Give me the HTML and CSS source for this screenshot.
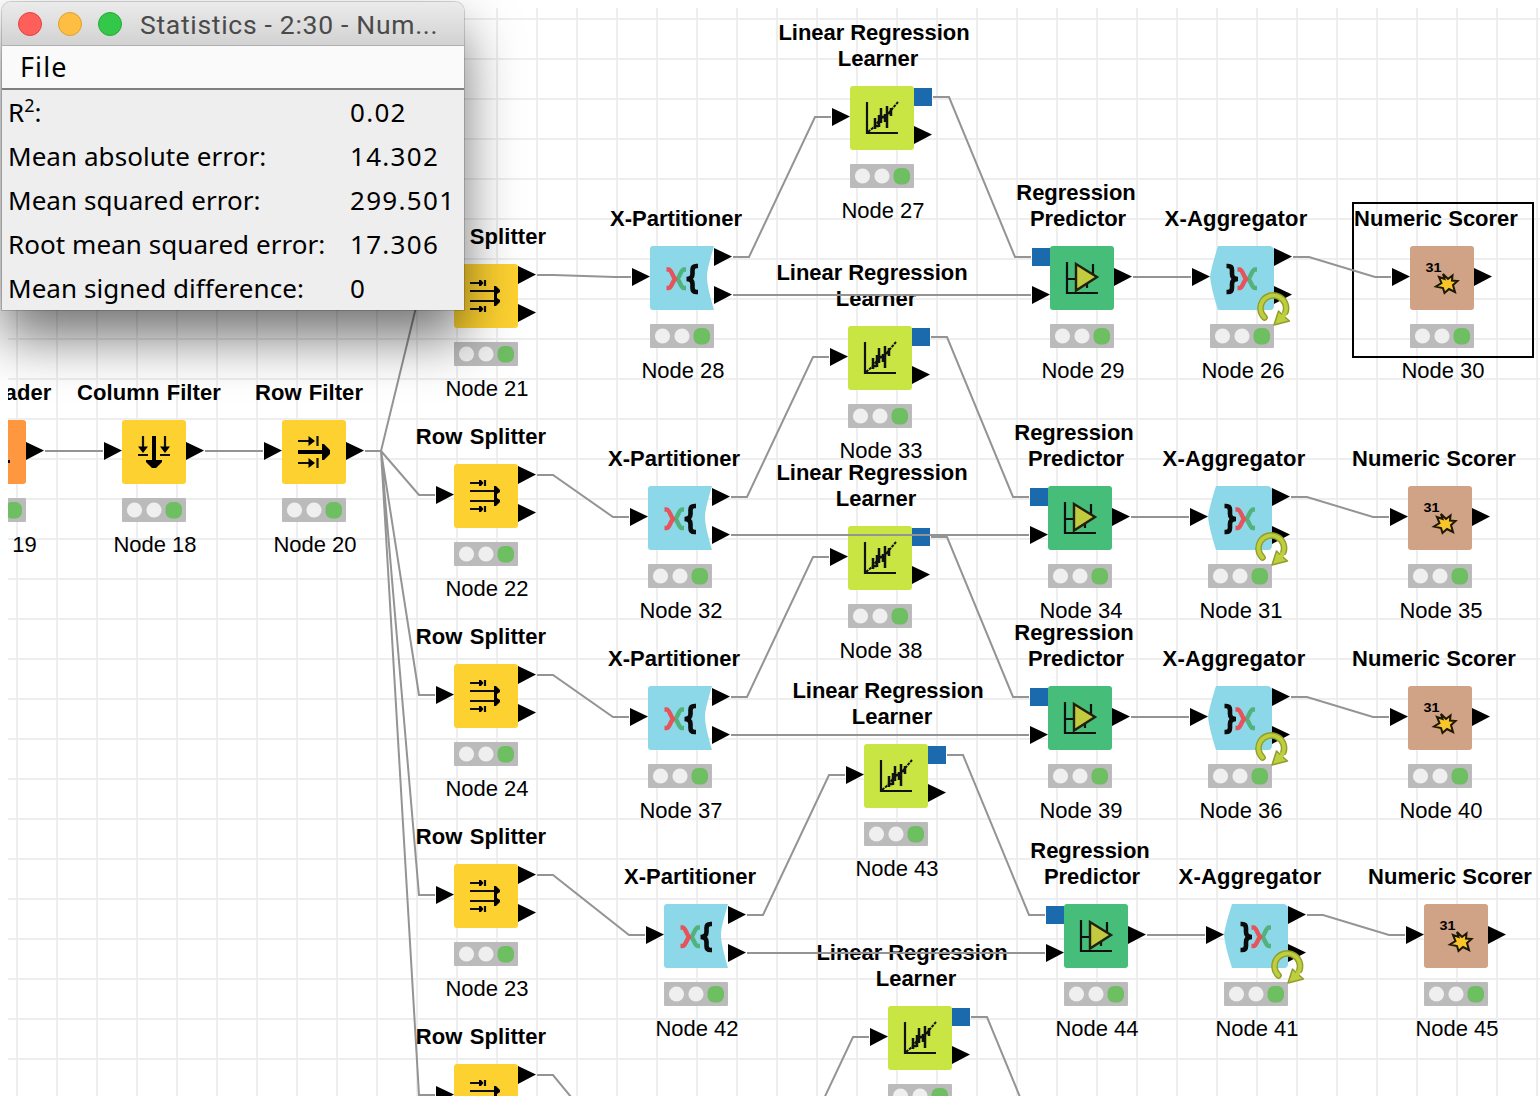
FILE: index.html
```html
<!DOCTYPE html>
<html lang="en">
<head>
<meta charset="utf-8">
<title>Workflow</title>
<link rel="stylesheet" href="styles.css">
</head>
<body>
<svg class="defs" aria-hidden="true">
  <defs>
    <path id="in" d="M-18 22L0 30.500L-18 40Z"/>
    <path id="out" d="M64 22L82 30.500L64 40Z"/>
    <path id="out-top" d="M64 2L82 10.500L64 20Z"/>
    <path id="out-low" d="M64 40L82 48.500L64 58Z"/>
    <g id="lights">
      <rect y="78" width="64" height="24" rx="1" fill="#bbb"/>
      <circle cx="12.500" cy="90" r="7.600" fill="#efefef"/>
      <circle cx="32" cy="90" r="7.600" fill="#efefef"/>
      <rect x="43.500" y="82" width="16.500" height="16.500" rx="6.500" fill="#6ebe62"/>
    </g>
    <g id="cross" fill="none" stroke-width="4.400">
      <path stroke="#52b27c" d="M19.500 2H17.500C14.500 2 14 8 11 11.500C14 15 14.500 20.500 17.500 20.500H19.500"/>
      <path stroke="#e5535b" d="M0 2H2C5 2 5.500 8 8.500 11.500C5.500 15 5 20.500 2 20.500H0"/>
    </g>
    <symbol id="reader" overflow="visible">
      <rect width="64" height="64" rx="3" fill="#fe973f"/>
      <rect x="45" y="40" width="3" height="3"/>
      <use href="#out"/><use href="#lights"/>
    </symbol>
    <symbol id="column-filter" overflow="visible">
      <rect width="64" height="64" rx="3" fill="#fdd130"/>
      <path d="M21 16V28M43 16V28M16 35H26M38 35H48" stroke="#111" stroke-width="2.200"/>
      <path d="M16 26.500H26L21 33ZM38 26.500H48L43 33ZM30 16h4v24h6v2l-6 6h-4l-6-6v-2h6Z"/>
      <use href="#in"/><use href="#out"/><use href="#lights"/>
    </symbol>
    <symbol id="row-filter" overflow="visible">
      <rect width="64" height="64" rx="3" fill="#fdd130"/>
      <path d="M16 21H28M16 43H28M35.500 16V26M35.500 38V48" stroke="#111" stroke-width="2.200"/>
      <path d="M26.500 16L33 21L26.500 26ZM26.500 38L33 43L26.500 48ZM16 30h24v-6h2l6 6v4l-6 6h-2v-6H16Z"/>
      <use href="#in"/><use href="#out"/><use href="#lights"/>
    </symbol>
    <symbol id="row-splitter" overflow="visible">
      <rect width="64" height="64" rx="3" fill="#fdd130"/>
      <path d="M16 19H27M16 45H27M31 16V22M31 42V48M16 27H44M16 37H44" stroke="#111" stroke-width="2.200"/>
      <path d="M25 16h2l2.500 3l-2.500 3h-2ZM25 42h2l2.500 3l-2.500 3h-2ZM40 22h2l4 4v2l-3 2v4l3 2v2l-4 4h-2Z"/>
      <use href="#in"/><use href="#out-top"/><use href="#out-low"/><use href="#lights"/>
    </symbol>
    <symbol id="partitioner" overflow="visible">
      <path d="M3 0H64C60 14 57 24 57 31S60 50 64 64H3Q0 64 0 61V3Q0 0 3 0Z" fill="#8dd8e8"/>
      <use href="#cross" x="16.500" y="21.500"/>
      <path d="M48 20H46.500Q42.500 20 42.500 24V28Q42.500 33 36.500 33Q42.500 33 42.500 38V42Q42.500 46 46.500 46H48" fill="none" stroke="#0b0b0b" stroke-width="4.600"/>
      <use href="#in"/><use href="#out-top"/><use href="#out-low"/><use href="#lights"/>
    </symbol>
    <symbol id="learner" overflow="visible">
      <rect width="64" height="64" rx="3" fill="#c8e544"/>
      <path d="M17 16V47H48" fill="none" stroke="#111" stroke-width="2.200"/>
      <path d="M18 46L24 41L28 36L32 32L38 28L42 23L48 16" fill="none" stroke="#111" stroke-width="2" stroke-dasharray="3 1"/>
      <path d="M25 32V43M29 29V41M31 22V37M35 28V36M37 20V42M41 22V30M25 40H29M29 34H31M31 31H37M37 27H41" fill="none" stroke="#111" stroke-width="2.500"/>
      <use href="#in"/><use href="#out-low"/><rect x="64" y="2" width="18" height="18" fill="#1c6aae"/>
      <use href="#lights"/>
    </symbol>
    <symbol id="predictor" overflow="visible">
      <rect width="64" height="64" rx="3" fill="#47bd7a"/>
      <path d="M17 16V47H48M17 33H25M43 18V30M37 35V42" fill="none" stroke="#111" stroke-width="2.200"/>
      <path d="M26 18L47 31L26 44.500Z" fill="#c2ca3f" stroke="#20210d" stroke-width="2.400"/>
      <rect x="-18" y="2" width="18" height="18" fill="#1c6aae"/>
      <path d="M-18 40L0 48.500L-18 58Z"/>
      <use href="#out"/><use href="#lights"/>
    </symbol>
    <symbol id="aggregator" overflow="visible">
      <path d="M8 0H60Q64 1 64 4V60Q64 63 61 64H8Q1 42 0 31Q1 22 8 0Z" fill="#8dd8e8"/>
      <path d="M16.500 20H18Q22 20 22 24V28Q22 33 28 33Q22 33 22 38V42Q22 46 18 46H16.500" fill="none" stroke="#0b0b0b" stroke-width="4.600"/>
      <use href="#cross" x="27.500" y="21.500"/>
      <use href="#in"/><use href="#out-top"/><use href="#out-low"/><use href="#lights"/>
      <path d="M54.500 71.500A12.800 12.800 0 1 1 75.500 66" fill="none" stroke="#929c2c" stroke-width="6.600" stroke-linecap="round"/>
      <path d="M68.500 65L64 79L79.500 75L76 72Z" fill="#becf3e" stroke="#929c2c" stroke-width="1.500" stroke-linejoin="round"/>
      <path d="M54.500 71.500A12.800 12.800 0 1 1 75.500 66L72 73" fill="none" stroke="#becf3e" stroke-width="3.800" stroke-linecap="round"/>
    </symbol>
    <symbol id="scorer" overflow="visible">
      <rect width="64" height="64" rx="3" fill="#d0a286"/>
      <text x="15.500" y="26" class="digits" textLength="16" lengthAdjust="spacingAndGlyphs">31</text>
      <path d="M33 28L38 33L42.500 29.500L42 34.500L47.500 35L43 39L45 46L39 43L34.500 47L33 42L26 40.500L31.500 37L29 31L34.500 33Z" fill="#f9c52b" stroke="#1d1705" stroke-width="2"/>
      <use href="#in"/><use href="#out"/><use href="#lights"/>
    </symbol>
  </defs>
</svg>

<main class="canvas">
  <div class="grid"></div>

  <div class="node cut" style="left:-38px;top:420px"><svg><use href="#reader"/></svg><b>ader</b><span>19</span></div>
  <div class="node" style="left:122px;top:420px"><svg><use href="#column-filter"/></svg><b>Column Filter</b><span>Node 18</span></div>
  <div class="node" style="left:282px;top:420px"><svg><use href="#row-filter"/></svg><b>Row Filter</b><span>Node 20</span></div>

  <div class="node" style="left:454px;top:264px"><svg><use href="#row-splitter"/></svg><b>Row Splitter</b><span>Node 21</span></div>
  <div class="node" style="left:454px;top:464px"><svg><use href="#row-splitter"/></svg><b>Row Splitter</b><span>Node 22</span></div>
  <div class="node" style="left:454px;top:664px"><svg><use href="#row-splitter"/></svg><b>Row Splitter</b><span>Node 24</span></div>
  <div class="node" style="left:454px;top:864px"><svg><use href="#row-splitter"/></svg><b>Row Splitter</b><span>Node 23</span></div>
  <div class="node" style="left:454px;top:1064px"><svg><use href="#row-splitter"/></svg><b>Row Splitter</b></div>

  <div class="node wide" style="left:650px;top:246px"><svg><use href="#partitioner"/></svg><b>X-Partitioner</b><span>Node 28</span></div>
  <div class="node wide" style="left:648px;top:486px"><svg><use href="#partitioner"/></svg><b>X-Partitioner</b><span>Node 32</span></div>
  <div class="node wide" style="left:648px;top:686px"><svg><use href="#partitioner"/></svg><b>X-Partitioner</b><span>Node 37</span></div>
  <div class="node wide" style="left:664px;top:904px"><svg><use href="#partitioner"/></svg><b>X-Partitioner</b><span>Node 42</span></div>

  <div class="node learner" style="left:850px;top:86px"><svg><use href="#learner"/></svg><b><i>Linear Regression</i><br>Learner</b><span>Node 27</span></div>
  <div class="node learner" style="left:848px;top:326px"><svg><use href="#learner"/></svg><b><i>Linear Regression</i><br>Learner</b><span>Node 33</span></div>
  <div class="node learner" style="left:848px;top:526px"><svg><use href="#learner"/></svg><b><i>Linear Regression</i><br>Learner</b><span>Node 38</span></div>
  <div class="node learner" style="left:864px;top:744px"><svg><use href="#learner"/></svg><b><i>Linear Regression</i><br>Learner</b><span>Node 43</span></div>
  <div class="node learner" style="left:888px;top:1006px"><svg><use href="#learner"/></svg><b><i>Linear Regression</i><br>Learner</b></div>

  <div class="node predictor" style="left:1050px;top:246px"><svg><use href="#predictor"/></svg><b><i>Regression</i><br>Predictor</b><span>Node 29</span></div>
  <div class="node predictor" style="left:1048px;top:486px"><svg><use href="#predictor"/></svg><b><i>Regression</i><br>Predictor</b><span>Node 34</span></div>
  <div class="node predictor" style="left:1048px;top:686px"><svg><use href="#predictor"/></svg><b><i>Regression</i><br>Predictor</b><span>Node 39</span></div>
  <div class="node predictor" style="left:1064px;top:904px"><svg><use href="#predictor"/></svg><b><i>Regression</i><br>Predictor</b><span>Node 44</span></div>

  <div class="node wide aggregator" style="left:1210px;top:246px"><svg><use href="#aggregator"/></svg><b>X-Aggregator</b><span>Node 26</span></div>
  <div class="node wide aggregator" style="left:1208px;top:486px"><svg><use href="#aggregator"/></svg><b>X-Aggregator</b><span>Node 31</span></div>
  <div class="node wide aggregator" style="left:1208px;top:686px"><svg><use href="#aggregator"/></svg><b>X-Aggregator</b><span>Node 36</span></div>
  <div class="node wide aggregator" style="left:1224px;top:904px"><svg><use href="#aggregator"/></svg><b>X-Aggregator</b><span>Node 41</span></div>

  <div class="node wide" style="left:1410px;top:246px"><svg><use href="#scorer"/></svg><b>Numeric Scorer</b><span>Node 30</span></div>
  <div class="node wide" style="left:1408px;top:486px"><svg><use href="#scorer"/></svg><b>Numeric Scorer</b><span>Node 35</span></div>
  <div class="node wide" style="left:1408px;top:686px"><svg><use href="#scorer"/></svg><b>Numeric Scorer</b><span>Node 40</span></div>
  <div class="node wide" style="left:1424px;top:904px"><svg><use href="#scorer"/></svg><b>Numeric Scorer</b><span>Node 45</span></div>

  <div class="selection"></div>

  <svg class="edges" viewBox="0 0 1540 1096">
    <path d="M45 451H103M205 451H263"/>
    <path d="M365 451H381L419 295H435M381 451L419 495H435M381 451L419 695H435M381 451L419 895H435M381 451L419 1095H435"/>
    <path d="M537 275H553L615 277H631M537 475H553L613 517H629M537 675H553L613 717H629M537 875H553L629 935H645M537 1075H553L653 1197"/>
    <path d="M733 257H749L815 117H831M731 497H747L813 357H829M731 697H747L813 557H829M747 915H763L829 775H845M787 1177L853 1037H869"/>
    <path d="M733 295H1031M731 535H1029M731 735H1029M747 953H1045"/>
    <path d="M933 97H949L1015 257H1031M931 337H947L1013 497H1029M931 537H947L1013 697H1029M947 755H963L1029 915H1045M971 1017H987L1053 1177"/>
    <path d="M1133 277H1191M1131 517H1189M1131 717H1189M1147 935H1205"/>
    <path d="M1293 257H1309L1375 277H1391M1291 497H1307L1373 517H1389M1291 697H1307L1373 717H1389M1307 915H1323L1389 935H1405"/>
  </svg>
</main>

<section class="window">
  <header class="titlebar">
    <i class="dot red"></i><i class="dot amber"></i><i class="dot green"></i>
    <h1>Statistics - 2:30 - Num...</h1>
  </header>
  <nav class="menu">File</nav>
  <dl class="stats">
    <dt>R<sup>2</sup>:</dt><dd>0.02</dd>
    <dt>Mean absolute error:</dt><dd>14.302</dd>
    <dt>Mean squared error:</dt><dd>299.501</dd>
    <dt>Root mean squared error:</dt><dd>17.306</dd>
    <dt>Mean signed difference:</dt><dd>0</dd>
  </dl>
</section>
</body>
</html>
```
FILE: styles.css
```css
* { box-sizing: border-box; }

body {
  margin: 0;
  position: relative;
  width: 1540px;
  height: 1096px;
  overflow: hidden;
  background: #fff;
  color: #000;
  font-family: "Liberation Sans", Arial, sans-serif;
}

.defs { position: absolute; width: 0; height: 0; }

/* Workflow canvas */
.canvas {
  position: relative;
  width: 1540px;
  height: 1096px;
  overflow: hidden;
  clip-path: inset(8px 0 0 8px);
}

.grid {
  height: 100%;
  background-image:
    linear-gradient(90deg, #eee 2px, transparent 2px),
    linear-gradient(#eee 2px, transparent 2px);
  background-size: 40px 40px;
  background-position: 16px 18px;
}

.node {
  position: absolute;
  width: 64px;
  font-size: 22px;
  line-height: 26px;
  font-kerning: none;
  white-space: nowrap;
  display: flex;
  flex-direction: column;
  align-items: center;
}

.node svg {
  width: 64px;
  height: 102px;
  overflow: visible;
  flex: none;
}

/* Titles grow upwards from the icon */
.node b {
  position: absolute;
  top: -14px;
  left: 27px;
  transform: translate(-50%, -100%);
  text-align: center;
  letter-spacing: .08px;
  word-spacing: 1px;
}

.node.wide b {
  left: 26px;
  letter-spacing: 0;
  word-spacing: 0;
}

.node.aggregator b { letter-spacing: .2px; }

.node.learner b,
.node.predictor b {
  left: 28px;
  letter-spacing: -.05px;
  word-spacing: 0;
}

.node b i { font-style: normal; }
.learner b i { margin-right: 8px; }
.predictor b i { margin-right: 4px; }

.node span {
  margin-top: 9.5px;
  margin-left: 2px;
}

.node.cut b { left: 66px; }
.node.cut span { margin-left: 61px; }

.digits {
  font: bold 13px "Liberation Sans", Arial, sans-serif;
}

.selection {
  position: absolute;
  left: 1352px;
  top: 202px;
  width: 182px;
  height: 156px;
  border: 2px solid #000;
}

.edges {
  position: absolute;
  left: 0;
  top: 0;
  width: 1540px;
  height: 1096px;
  fill: none;
  stroke: #949494;
  stroke-width: 2;
}

/* Statistics window */
.window {
  position: absolute;
  left: 2px;
  top: 2px;
  width: 462px;
  height: 308px;
  display: flex;
  flex-direction: column;
  border-radius: 9px 9px 0 0;
  background: #eee;
  box-shadow: 0 0 0 1px rgba(0, 0, 0, .16), 0 28px 54px rgba(0, 0, 0, .55);
  font-family: "Noto Sans", "Open Sans", sans-serif;
  font-size: 26px;
}

.titlebar {
  height: 44px;
  display: flex;
  align-items: center;
  gap: 16px;
  padding-left: 16px;
  border-radius: 9px 9px 0 0;
  border-bottom: 1px solid #b0b0b0;
  background: linear-gradient(#ebebeb, #d2d2d2);
}

.dot {
  width: 24px;
  height: 24px;
  border-radius: 50%;
}

.red { background: #fe5f5b; border: 1px solid #e0443f; }
.amber { background: #fdbe41; border: 1px solid #dea032; }
.green { background: #34c84a; border: 1px solid #24ab36; }

.titlebar h1 {
  margin: 0 0 0 2px;
  padding-top: 2px;
  font: 400 26.500px/42px Roboto, sans-serif;
  letter-spacing: .7px;
  white-space: nowrap;
  color: #4a4a4a;
}

.menu {
  height: 44px;
  padding-left: 18px;
  line-height: 42px;
  font-size: 27px;
  letter-spacing: 1.1px;
  background: #fafafa;
  border-bottom: 2px solid #808080;
}

.stats {
  margin: 0;
  padding-left: 6px;
  display: grid;
  grid-template-columns: 342px 1fr;
  grid-auto-rows: 44px;
  line-height: 44px;
  white-space: nowrap;
}

.stats dt { letter-spacing: .06px; }

.stats dd {
  margin: 0;
  letter-spacing: 1.3px;
}

.stats sup {
  font-size: 18px;
  line-height: 0;
  vertical-align: 10px;
}
```
